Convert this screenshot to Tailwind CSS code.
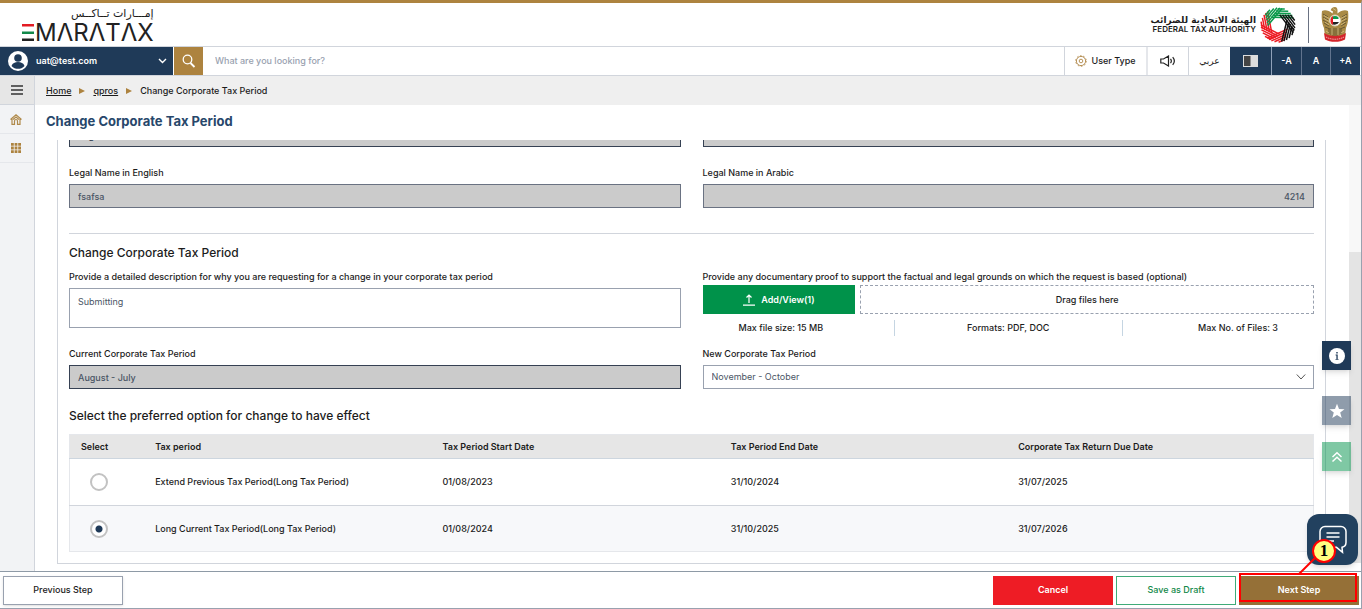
<!DOCTYPE html>
<html lang="en">
<head>
  <meta charset="UTF-8">
  <meta name="viewport" content="width=device-width, initial-scale=1.0">
  <title>Change Corporate Tax Period</title>
  <script src="https://cdn.jsdelivr.net/npm/@tailwindcss/browser@4"></script>
</head>
<body class="relative flex h-screen flex-col overflow-hidden border-t-3 border-r border-b border-t-[#ad833f] border-r-gray-400 border-b-gray-400 bg-white font-[Inter,'Noto_Sans',sans-serif] text-[9px] leading-3 font-medium text-[#1c1c1c]">

  <!-- Logos -->
  <header class="flex h-[44px] shrink-0 items-center justify-between border-b border-gray-300 pr-3 pl-[21px]">
    <a href="#" class="flex flex-col items-end" aria-label="EmaraTax">
      <span dir="rtl" lang="ar" class="text-[11px] leading-4 font-normal font-['DejaVu_Sans',sans-serif]">إمـــارات تــاكــس</span>
      <span class="flex items-center gap-px text-[24px] leading-[22px] font-normal text-[#222]">
        <svg class="h-[17px] w-[13px]" viewBox="0 0 13 17"><path fill="#e31b23" d="M1 0h12v2.5H1z"/><path fill="#12894a" d="M1 7.5h12V10H1z"/><path fill="#222" d="M1 14.5h12V17H1z"/></svg>
        <span>MΛRΛTΛX</span>
      </span>
    </a>
    <div class="flex items-center">
      <a href="#" class="flex items-center gap-1">
        <span class="flex flex-col items-end">
          <span dir="rtl" lang="ar" class="text-[9px] leading-[10px] font-bold font-['DejaVu_Sans',sans-serif]">الهيئة الاتحادية للضرائب</span>
          <span class="text-[8px] leading-[9px] font-semibold">FEDERAL TAX AUTHORITY</span>
        </span>
        <svg class="size-9" viewBox="-18 -18 36 36" fill="none" stroke-width="1.500">
          <defs>
            <path id="blade" d="M-7-7.600H15.300M-5.400-9.700H14.200M-3.800-11.800H12.500M-2.200-13.900H10M-.6-16H6.500"/>
          </defs>
          <use href="#blade" stroke="#ed1c24" transform="rotate(156)"/>
          <use href="#blade" stroke="#ed1c24" transform="rotate(207)"/>
          <use href="#blade" stroke="#ed1c24" transform="rotate(259)"/>
          <use href="#blade" stroke="#0b9a4c" transform="rotate(-50)"/>
          <use href="#blade" stroke="#0b9a4c" transform="rotate(1)"/>
          <use href="#blade" stroke="#111" transform="rotate(53)"/>
          <use href="#blade" stroke="#111" transform="rotate(104)"/>
        </svg>
      </a>
      <span class="mx-3 h-9 w-px bg-gray-500"></span>
      <svg class="h-[35px] w-[28px]" viewBox="0 0 28 35">
        <path fill="#a98a45" d="M14 0c-2.500 0-4 1.300-4.300 3.200L12 4.500l-.5 2C8 3.500 4 2.500 1 4c-.8 6 0 13 2 17L4 29l10 4 10-4 1-8c2-4 2.800-11 2-17-3-1.500-7-.5-10.500 2.500L16.500 3C16.300 1.200 15.500 0 14 0z"/>
        <path stroke="#5f5130" stroke-width=".9" fill="none" d="M2 7l5 3M2 10l5 3M2 13l5 3M3 16l5 3M4 20l5 2M26 7l-5 3M26 10l-5 3M26 13l-5 3M25 16l-5 3M24 20l-5 2M10 21v7M12 21v8M14 21v8M16 21v8M18 21v7M8 22v5M20 22v5"/>
        <path stroke="#e2cd91" stroke-width=".7" fill="none" d="M3 8.500l5 3M3 11.500l5 3M4 15l4 3M25 8.500l-5 3M25 11.500l-5 3M24 15l-4 3M12 1.500l3 2M5 24l3 2M23 24l-3 2M11 21v7M17 21v7"/>
        <circle cx="14" cy="13.500" r="5.500" fill="#fff" stroke="#dcd2b4"/>
        <path fill="#0b9a4c" d="M10.500 10.500a5 5 0 0 1 7 0v1.500h-7z"/>
        <path fill="#222" d="M10.500 15h7.500a5 5 0 0 1-7.500 1.700z"/>
        <path fill="#e31b23" d="M9.500 12a5 5 0 0 1 2.500-3v9a5 5 0 0 1-2.500-3z"/>
        <path fill="#d4252b" d="M3 26c3 2 7 3 11 3s8-1 11-3l-1 6.500c-3 1.800-6 2.300-10 2.300S7 34.300 4 32.500z"/>
        <path stroke="#f3cccc" stroke-width=".8" stroke-dasharray="1.500 .7" fill="none" d="M5 30c5 3 13 3 18 0"/>
      </svg>
    </div>
  </header>

  <!-- Toolbar -->
  <div class="flex h-[29px] shrink-0 items-stretch border-b border-gray-300 bg-white">
    <button class="flex w-[173px] items-center gap-2 bg-[#1f3a58] pr-1.5 pl-2 text-left font-semibold text-white">
      <svg class="size-5" viewBox="0 0 20 20"><circle cx="10" cy="10" r="10" fill="#fff"/><circle cx="10" cy="7" r="3.800" fill="#1f3a58"/><path fill="#1f3a58" d="M3.500 15c1-3 3.500-4 6.500-4s5.500 1 6.500 4c-3.500 3.800-9.500 3.800-13 0z"/></svg>
      <span class="flex-1">uat@test.com</span>
      <svg class="h-2 w-[9px]" viewBox="0 0 9 8" fill="none" stroke="#fff" stroke-width="1.400"><path d="M1 2l3.500 3.500L8 2"/></svg>
    </button>
    <button class="ml-px flex w-[29px] items-center justify-center bg-[#ad833f]" aria-label="Search">
      <svg class="size-[14px]" viewBox="0 0 14 14" fill="none" stroke="#fff" stroke-width="1.300"><circle cx="5.500" cy="5.500" r="4.300"/><path d="M8.500 9l4 4" stroke-width="1.800"/></svg>
    </button>
    <input type="search" aria-label="Search the site" placeholder="What are you looking for?" class="min-w-0 flex-1 px-3 outline-none placeholder:text-gray-400">
    <button class="flex w-[82px] items-center justify-center gap-1 border-l border-gray-300">
      <svg class="size-3" viewBox="0 0 12 12" fill="none" stroke="#b8935a"><circle cx="6" cy="6" r="4.600"/><circle cx="6" cy="6" r="5.300" stroke-dasharray="1.600 1.730"/><circle cx="6" cy="6" r="1.800"/></svg>
      User Type
    </button>
    <button class="flex w-[42px] items-center justify-center border-l-2 border-gray-200" aria-label="Listen">
      <svg class="h-3 w-4" viewBox="0 0 16 12" fill="none" stroke="#222" stroke-width="1.200"><path d="M.8 4v4h2.700L8.500 11V1L3.500 4z"/><path d="M10.500 3.800c1 1.300 1 3.100 0 4.400M12.700 2.200c2 2.300 2 5.300 0 7.600"/></svg>
    </button>
    <button lang="ar" class="w-[42px] border-l border-gray-300 font-['DejaVu_Sans',sans-serif]">عربي</button>
    <button class="flex w-[41px] items-center justify-center bg-[#1f3a58]" aria-label="Contrast">
      <svg class="h-3 w-[15px]" viewBox="0 0 15 12"><path fill="#ddd" d="M0 0h15v12H0z"/><path fill="#444" d="M1 1h6.500v10H1z"/></svg>
    </button>
    <button class="w-[30px] border-l border-slate-400 bg-[#1f3a58] font-semibold text-white">-A</button>
    <button class="w-[29px] border-l border-slate-500 bg-[#1f3a58] font-semibold text-white">A</button>
    <button class="mr-px w-[30px] border-l border-slate-500 bg-[#1f3a58] font-semibold text-white">+A</button>
  </div>

  <div class="flex min-h-0 flex-1">
    <!-- Side menu -->
    <nav class="flex w-[35px] shrink-0 flex-col border-r border-gray-300 bg-[#f2f3f5]">
      <button class="flex h-[29px] items-center justify-center border-b border-gray-300 bg-[#e6e6e6]" aria-label="Menu">
        <svg class="h-[10px] w-3" viewBox="0 0 12 10" stroke="#333" stroke-width="1.300"><path d="M0 1h12M0 5h12M0 9h12"/></svg>
      </button>
      <a href="#" class="flex h-[29px] items-center border-b border-gray-200 pl-[10px]" aria-label="Home">
        <svg class="h-[11px] w-3" viewBox="0 0 12 11" fill="none" stroke="#b08a4b" stroke-width="1.200"><path d="M.5 5.500L6 .8l5.500 4.700M2 5v5.400h2.500V7a1.500 1.500 0 0 1 3 0v3.400H10V5M3 5.500L6 3l3 2.500"/></svg>
      </a>
      <a href="#" class="flex h-[29px] items-center border-b border-gray-200 pl-[11px]" aria-label="Services">
        <svg class="size-[10px]" viewBox="0 0 10 10" fill="#ad833f"><path d="M0 0h2.800v2.800H0zM3.600 0h2.800v2.800H3.600zM7.200 0H10v2.800H7.200zM0 3.600h2.800v2.800H0zM3.600 3.600h2.800v2.800H3.600zM7.200 3.600H10v2.800H7.200zM0 7.200h2.800V10H0zM3.600 7.200h2.800V10H3.600zM7.200 7.200H10V10H7.200z"/></svg>
      </a>
    </nav>

    <div class="flex min-w-0 flex-1 flex-col">
      <nav class="flex h-[29px] shrink-0 items-center gap-2 bg-[#efefef] pl-[11px]" aria-label="Breadcrumb">
        <a href="#" class="underline">Home</a>
        <svg class="size-[6px]" viewBox="0 0 6 6" fill="#ad833f"><path d="M0 0l6 3-6 3z"/></svg>
        <a href="#" class="underline">qpros</a>
        <svg class="size-[6px]" viewBox="0 0 6 6" fill="#ad833f"><path d="M0 0l6 3-6 3z"/></svg>
        <span>Change Corporate Tax Period</span>
      </nav>

      <div class="flex min-h-0 flex-1">
        <main class="flex min-w-0 flex-1 flex-col">
          <h1 class="h-[35px] shrink-0 pl-[11px] text-[13px] leading-8 font-bold text-[#27476b]">Change Corporate Tax Period</h1>

          <form class="flex min-h-0 flex-1 flex-col justify-end overflow-hidden pr-[23px] pb-[7px] pl-[22px]">
            <div class="border border-gray-300 px-[11px] pb-[11px]">
              <div class="grid grid-cols-2 gap-x-[22px]">
                <input disabled aria-label="Legal entity type" value="Legal Person" class="h-6 border border-gray-700 bg-[#cbcbcb] px-2 text-gray-700">
                <input disabled aria-label="Registration number" class="h-6 border border-gray-700 bg-[#cbcbcb] px-2">
              </div>

              <div class="mt-5 grid grid-cols-2 gap-x-[22px]">
                <label class="flex flex-col gap-[5px]">Legal Name in English
                  <input disabled value="fsafsa" class="h-6 border border-gray-500 bg-[#cbcbcb] px-2 text-gray-600">
                </label>
                <label class="flex flex-col gap-[5px]">Legal Name in Arabic
                  <input disabled value="4214" class="h-6 border border-gray-500 bg-[#cbcbcb] px-2 text-right text-gray-600">
                </label>
              </div>

              <hr class="mt-[25px] border-gray-300">
              <h2 class="mt-[11px] text-[12px] leading-4">Change Corporate Tax Period</h2>

              <div class="mt-[10px] grid grid-cols-2 gap-x-[22px]">
                <label class="flex flex-col gap-[5px]">Provide a detailed description for why you are requesting for a change in your corporate tax period
                  <textarea class="h-10 resize-none border border-gray-400 px-2 py-[7px] font-normal text-gray-600">Submitting</textarea>
                </label>
                <div class="flex flex-col">
                  <span>Provide any documentary proof to support the factual and legal grounds on which the request is based (optional)</span>
                  <div class="mt-[2px] flex h-[29px] gap-[5px]">
                    <button type="button" class="flex w-1/4 items-center justify-center gap-[6px] bg-[#00924a] font-semibold text-white">
                      <svg class="h-3 w-3" viewBox="0 0 12 12" fill="none" stroke="#fff" stroke-width="1.200"><path d="M0 11.200h12M6 9V1M3.500 3.500L6 1l2.500 2.500"/></svg>
                      Add/View(1)
                    </button>
                    <div class="flex flex-1 items-center justify-center border border-dashed border-gray-400">Drag files here</div>
                  </div>
                  <div class="mt-[6px] grid grid-cols-[5fr_6fr_5fr] leading-4">
                    <span class="pl-9">Max file size: 15 MB</span>
                    <span class="border-x border-[#c5d5e2] text-center">Formats: PDF, DOC</span>
                    <span class="pr-9 text-right">Max No. of Files: 3</span>
                  </div>
                </div>
              </div>

              <div class="mt-3 grid grid-cols-2 gap-x-[22px]">
                <label class="flex flex-col gap-[5px]">Current Corporate Tax Period
                  <input disabled value="August - July" class="h-6 border border-gray-700 bg-[#cbcbcb] px-2 text-gray-600">
                </label>
                <label class="relative flex flex-col gap-[5px]">New Corporate Tax Period
                  <select class="h-6 appearance-none border border-gray-400 bg-white px-2 font-normal text-gray-600">
                    <option>November - October</option>
                  </select>
                  <svg class="pointer-events-none absolute right-2 bottom-2 h-2 w-[10px]" viewBox="0 0 10 8" fill="none" stroke="#555"><path d="M.8 1.500L5 6l4.200-4.500"/></svg>
                </label>
              </div>

              <h2 class="mt-[19px] text-[12px] leading-4">Select the preferred option for change to have effect</h2>
              <table class="mt-[10px] w-full table-fixed border-collapse border border-gray-200 text-left">
                <thead class="bg-[#e6e6e6]">
                  <tr class="h-6 border-b border-[#cdd6df]">
                    <th class="w-[6%] pl-[11px] font-semibold">Select</th>
                    <th class="w-[23.1%] pl-[11px] font-semibold">Tax period</th>
                    <th class="w-[23.1%] pl-[11px] font-semibold">Tax Period Start Date</th>
                    <th class="w-[23.1%] pl-3 font-semibold">Tax Period End Date</th>
                    <th class="pl-3 font-semibold">Corporate Tax Return Due Date</th>
                  </tr>
                </thead>
                <tbody>
                  <tr class="h-[47px] border-b border-gray-300">
                    <td class="pl-5"><input type="radio" name="option" aria-label="Extend Previous Tax Period" class="block size-[18px] appearance-none rounded-full border-2 border-[#c2c2c2] bg-white checked:bg-[radial-gradient(circle,#1f3a58_3px,white_4px)]"></td>
                    <td class="pl-[11px]">Extend Previous Tax Period(Long Tax Period)</td>
                    <td class="pl-[11px]">01/08/2023</td>
                    <td class="pl-3">31/10/2024</td>
                    <td class="pl-3">31/07/2025</td>
                  </tr>
                  <tr class="h-[46px] bg-[#f7f8fa]">
                    <td class="pl-5"><input type="radio" name="option" checked aria-label="Long Current Tax Period" class="block size-[18px] appearance-none rounded-full border-2 border-[#c2c2c2] bg-white checked:bg-[radial-gradient(circle,#1f3a58_3px,white_4px)]"></td>
                    <td class="pl-[11px]">Long Current Tax Period(Long Tax Period)</td>
                    <td class="pl-[11px]">01/08/2024</td>
                    <td class="pl-3">31/10/2025</td>
                    <td class="pl-3">31/07/2026</td>
                  </tr>
                </tbody>
              </table>
            </div>
          </form>
        </main>

        <!-- Scroll track -->
        <div class="mb-2 flex w-3 shrink-0 flex-col justify-end bg-[#f8f8f8]">
          <div class="h-[68%] bg-[#e4e4e4]"></div>
        </div>
      </div>
    </div>
  </div>

  <footer class="flex h-[37px] shrink-0 items-center gap-[3px] border-t border-[#8e9aa6] bg-white pr-[2px] pl-[3px]">
    <button class="mr-auto h-[29px] w-[120px] border border-gray-400 shadow">Previous Step</button>
    <button class="h-[29px] w-[120px] bg-[#ee1c25] font-semibold text-white">Cancel</button>
    <button class="h-[29px] w-[120px] border border-[#3fab78] text-[#12894a]">Save as Draft</button>
    <button class="h-[29px] w-[120px] bg-[#957037] font-semibold text-white">Next Step</button>
  </footer>

  <!-- Floating actions -->
  <div class="absolute right-[10px] bottom-[137px] flex flex-col">
    <button class="flex size-[29px] items-center justify-center bg-[#1f3a58] shadow-md" aria-label="Information">
      <svg class="size-4" viewBox="0 0 16 16"><circle cx="8" cy="8" r="8" fill="#fff"/><path fill="#1f3a58" d="M7.300 4h1.400v1.400H7.300zM6.600 6.600h2.100v4.300h.8v.8H6.500v-.8h.9V7.400h-.8z"/></svg>
    </button>
    <button class="mt-[26px] flex size-[29px] items-center justify-center bg-[#1f3a58]/50 shadow-md" aria-label="Favourite">
      <svg class="size-4" viewBox="0 0 16 16" fill="#fff"><path d="M8 .8l2 5.100 5.500.3-4.300 3.400 1.500 5.300L8 11.900l-4.700 3 1.500-5.300L.5 6.200l5.500-.3z"/></svg>
    </button>
    <button class="mt-[17px] flex size-[29px] items-center justify-center bg-[#00924a]/50 shadow-md" aria-label="Back to top">
      <svg class="size-3" viewBox="0 0 12 12" fill="none" stroke="#fff" stroke-width="1.500"><path d="M1.500 6L6 1.800 10.500 6M1.500 10.500L6 6.300l4.500 4.200"/></svg>
    </button>
  </div>
  <button class="absolute right-[3px] bottom-[43px] flex size-[51px] items-center justify-center rounded-xl bg-[#22415f] shadow-md" aria-label="Chat">
    <svg class="size-[30px]" viewBox="0 0 30 30" fill="none" stroke="#fff" stroke-width="1.500"><path d="M7 1.500h16a5 5 0 0 1 5 5v11a5 5 0 0 1-4 4.800l.5 5-6-5H7a5 5 0 0 1-5-4.800v-11a5 5 0 0 1 5-5z"/><path d="M8.500 8h13M8.500 12h13M8.500 16H16"/></svg>
  </button>

  <!-- Step callout -->
  <div class="pointer-events-none absolute right-[4px] bottom-[6px] h-[29px] w-[118px] border-2 border-[#ff0000]"></div>
  <svg class="pointer-events-none absolute right-[36px] bottom-[34px] h-5 w-[28px]" viewBox="0 0 28 20"><path d="M22 0L2 20" stroke="#ff0000" stroke-width="2"/></svg>
  <span class="absolute right-[25px] bottom-[45px] flex size-6 items-center justify-center rounded-full border-2 border-[#ff0000] bg-[#ffff80] font-['Liberation_Serif',serif] text-[17px] font-bold text-black">1</span>
</body>
</html>
